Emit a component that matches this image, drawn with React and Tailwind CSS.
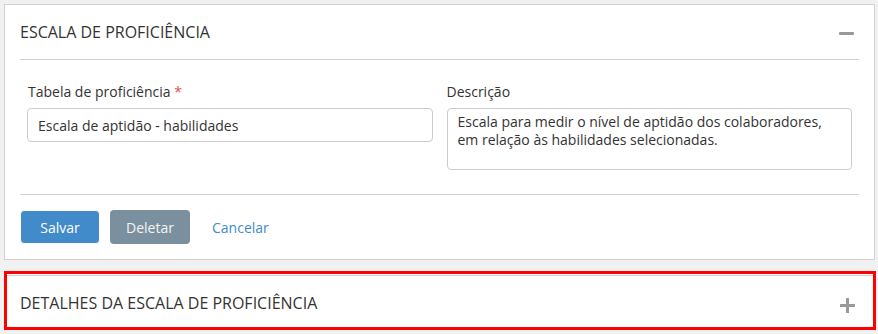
import React from "react";

const font = { fontFamily: '"Open Sans", "Noto Sans", sans-serif' };

const MinusIcon = () => (
  <svg width="15" height="15" viewBox="0 0 15 15" className="mt-[3px]">
    <rect x="0" y="6" width="15" height="3" rx="1" fill="#999" />
  </svg>
);

const PlusIcon = () => (
  <svg width="15" height="15" viewBox="0 0 15 15" className="mt-[6px]">
    <rect x="0" y="6" width="15" height="3" rx="0.5" fill="#999" />
    <rect x="6" y="0" width="3" height="15" rx="0.5" fill="#999" />
  </svg>
);

const App = () => {
  return (
    <div
      className="min-h-screen bg-[#f1f1f1] pt-[4px] pl-[4px] pr-[3px] text-[#333]"
      style={font}
    >
      {/* escala */}
      <div className="bg-white border border-[#d0d0d0]">
        <div className="mx-[15px]">
          <div className="h-[55px] flex items-center justify-between border-b border-[#d0d0d0]">
            <h2 className="text-[16px] uppercase">Escala de proficiência</h2>
            <div className="mr-[5px]">
              <MinusIcon />
            </div>
          </div>

          <div className="grid grid-cols-2 pt-[22px] pb-[24px] border-b border-[#d0d0d0]">
            <div className="px-[7px]">
              <label className="block text-[14px] leading-5 mb-[6px] pl-px">
                Tabela de proficiência <span className="text-[#d9534f]">*</span>
              </label>
              <input
                className="w-full h-[34px] border border-[#ccc] rounded-[4px] px-[10px] text-[14px] text-[#333] outline-none"
                defaultValue="Escala de aptidão - habilidades"
                style={font}
              />
            </div>
            <div className="px-[7px]">
              <label className="block text-[14px] leading-5 mb-[6px]">
                Descrição
              </label>
              <textarea
                className="block w-full h-[62px] border border-[#ccc] rounded-[4px] px-[10px] py-[4px] text-[14px] leading-[18px] text-[#333] resize-none outline-none"
                defaultValue="Escala para medir o nível de aptidão dos colaboradores, em relação às habilidades selecionadas."
                style={font}
              />
            </div>
          </div>

          <div className="flex items-center gap-[10px] py-[15px]">
            <button className="h-[34px] w-[80px] border border-white bg-[#428bca] rounded-[4px] text-white text-[14px]">
              Salvar
            </button>
            <button className="h-[34px] w-[80px] bg-[#7a909e] rounded-[4px] text-[#f4f4f4] text-[14px]">
              Deletar
            </button>
            <button className="h-[34px] px-[12px] text-[#428bca] text-[14px]">
              Cancelar
            </button>
          </div>
        </div>
      </div>

      {/* detalhes */}
      <div className="mt-[11px] mr-[-1px] border-[3px] border-[#ff0000] bg-white pt-px">
        <div className="border-t border-[#d0d0d0]">
          <div className="mx-[13px] h-[51px] pt-[2px] flex items-center justify-between">
            <h2 className="text-[16px] uppercase">Detalhes da escala de proficiência</h2>
            <div className="mr-[5px]">
              <PlusIcon />
            </div>
          </div>
        </div>
      </div>
    </div>
  );
};

export default App;
